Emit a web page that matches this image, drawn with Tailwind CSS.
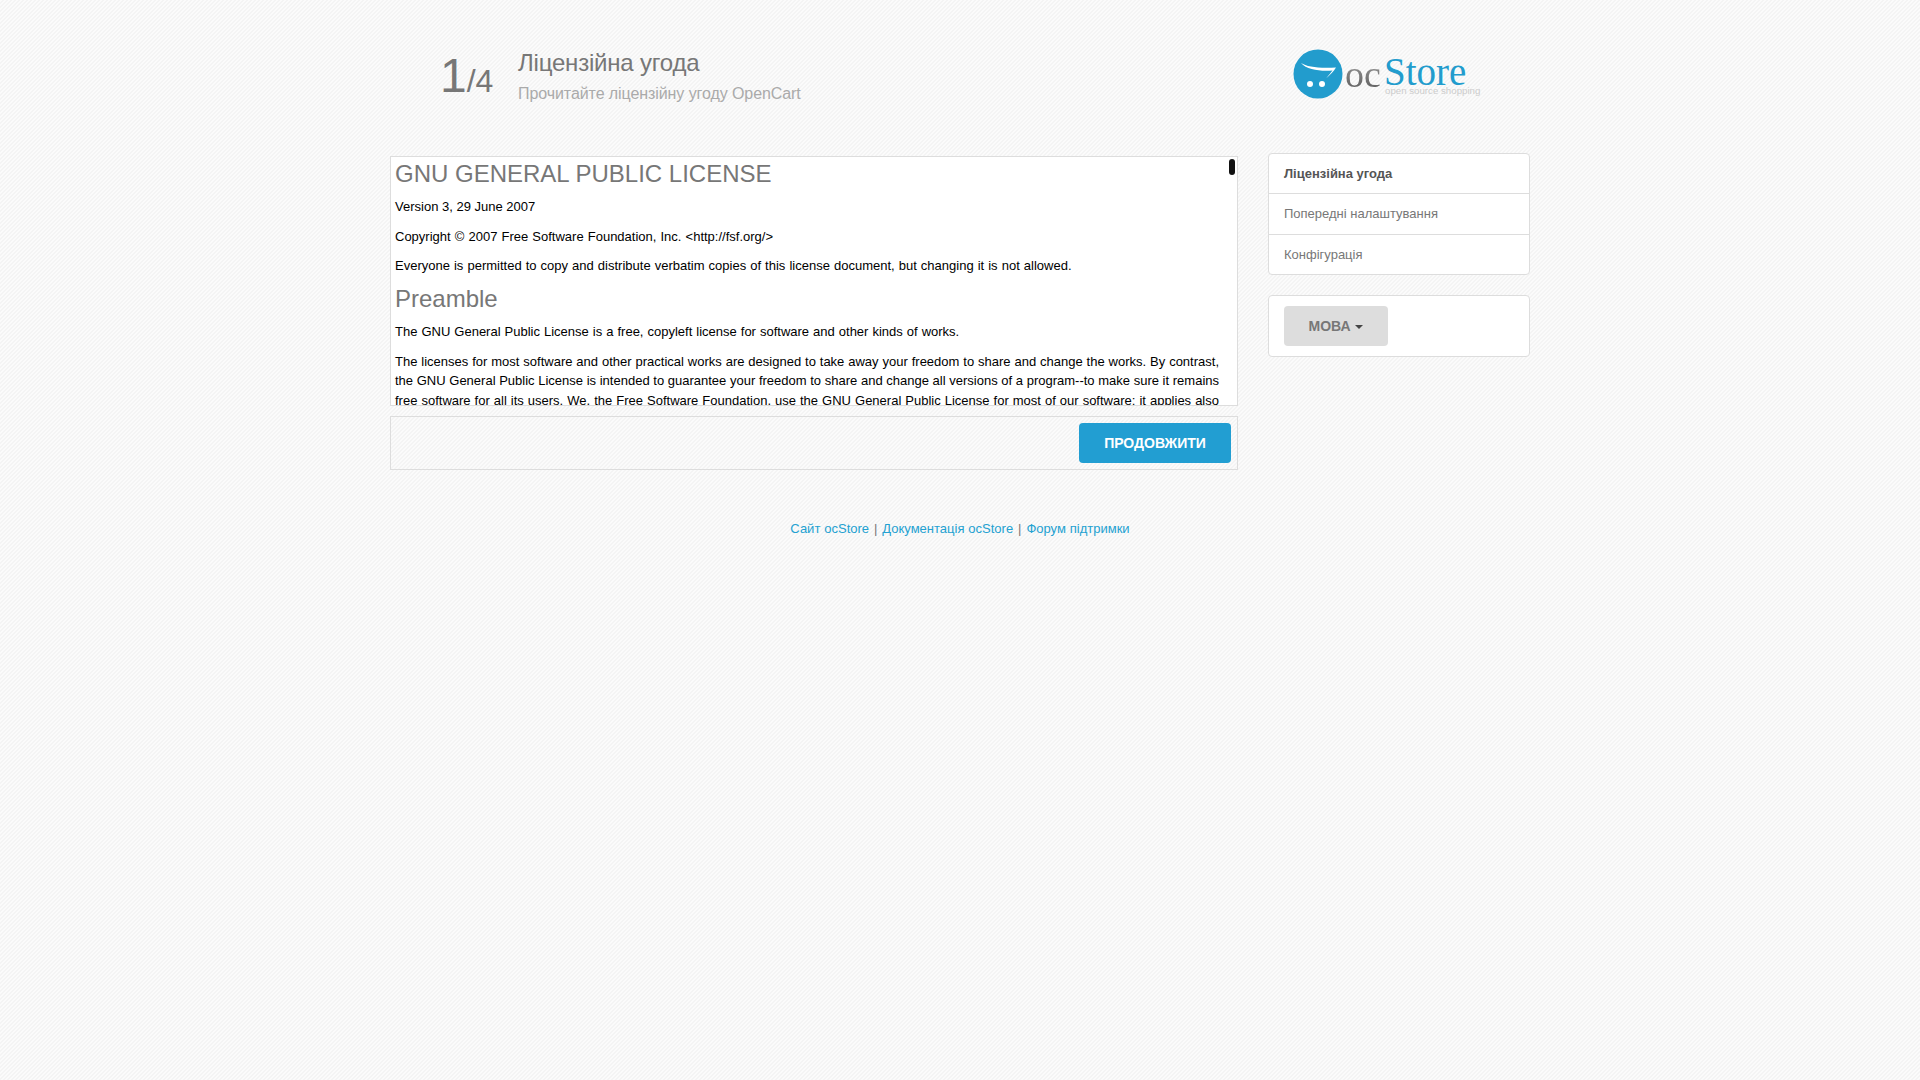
<!DOCTYPE html>
<html lang="uk">
  <head>
    <meta charset="UTF-8" />
    <meta name="viewport" content="width=device-width, initial-scale=1.0" />
    <script src="https://cdn.jsdelivr.net/npm/@tailwindcss/browser@4"></script>
    <title>ocStore</title>
  </head>
  <body class="min-h-screen font-['Liberation_Sans',Arial,sans-serif] text-[13px] leading-[19.5px] text-[#777] bg-[#f7f7f7] bg-[linear-gradient(135deg,#fbfbfb_25%,#f4f4f4_25%,#f4f4f4_50%,#fbfbfb_50%,#fbfbfb_75%,#f4f4f4_75%)] bg-[length:4px_4px]">
    <div class="w-[1170px] mx-auto px-[15px]">
      <!-- Header -->
      <header class="flex justify-between h-[153px]">
        <div class="flex pl-[50px] pt-[44px]">
          <div class="w-[78px] h-[64px] flex items-baseline text-[#777]">
            <span class="text-[48px] leading-[64px]">1</span><span class="text-[32px]">/4</span>
          </div>
          <div class="pt-[1px]">
            <h1 class="text-[24px] leading-[36px] font-normal tracking-[-0.2px] text-[#777]">Ліцензійна угода</h1>
            <p class="text-[16px] leading-[25px] tracking-[-0.08px] text-[#aaa]">Прочитайте ліцензійну угоду OpenCart</p>
          </div>
        </div>
        <!-- Logo -->
        <div class="flex items-center gap-[1px] h-[50px] mt-[49px] mr-[50px]">
          <svg width="50" height="50" viewBox="0 0 50 50">
            <circle cx="25" cy="25" r="24.5" fill="#229ccd" />
            <path d="M8 14 C14 18 26 19.500 43 18.500 C41 22 37 26 33 29.500 C36 26 38 23.500 39.500 21.500 C28 22.500 14 21 8 14 Z" fill="#fff" />
            <circle cx="17" cy="35" r="3" fill="#fff" />
            <circle cx="29" cy="35" r="3" fill="#fff" />
          </svg>
          <div class="relative h-[50px] w-[136px]">
            <span class="absolute left-[1px] top-[3px] text-[38px] leading-[44px] font-['Liberation_Serif',serif] text-transparent bg-clip-text bg-gradient-to-b from-[#aaa] to-[#555]">oc</span>
            <span class="absolute left-[40px] top-[9px] text-[39px] leading-[28px] font-['Liberation_Serif',serif] text-[#229ccd]">Store</span>
            <span class="absolute left-[41px] top-[37px] text-[9.7px] leading-[10px] text-[#ccc] whitespace-nowrap">open source shopping</span>
          </div>
        </div>
      </header>

      <div class="flex gap-[30px]">
        <!-- Licence column -->
        <main class="w-[848px] pt-[3px]">
          <div class="relative h-[250px] bg-white border border-[#ddd] overflow-hidden text-black">
            <div class="absolute right-[2px] top-[2px] w-[6px] h-[16px] rounded-[3px] bg-[#111]"></div>
            <div class="pl-[4px] pr-[18px] pt-[4px]">
              <h2 class="text-[24px] leading-[26.400px] text-[#777] mb-[10px]">GNU GENERAL PUBLIC LICENSE</h2>
              <p class="mb-[10px]">Version 3, 29 June 2007</p>
              <p class="mb-[10px] [word-spacing:0.5px]">Copyright © 2007 Free Software Foundation, Inc. &lt;http://fsf.org/&gt;</p>
              <p class="mb-[10px] [word-spacing:0.45px]">Everyone is permitted to copy and distribute verbatim copies of this license document, but changing it is not allowed.</p>
              <h3 class="text-[24px] leading-[26.400px] text-[#777] mb-[10px]">Preamble</h3>
              <p class="mb-[10px] [word-spacing:0.4px]">The GNU General Public License is a free, copyleft license for software and other kinds of works.</p>
              <p class="text-justify">The licenses for most software and other practical works are designed to take away your freedom to share and change the works. By contrast, the GNU General Public License is intended to guarantee your freedom to share and change all versions of a program--to make sure it remains free software for all its users. We, the Free Software Foundation, use the GNU General Public License for most of our software; it applies also to any other work released this way by its authors. You can apply it to your programs, too.</p>
            </div>
          </div>
          <div class="mt-[10px] h-[54px] border border-[#ddd] flex justify-end items-center pr-[6px]">
            <button type="button" class="w-[152px] h-[40px] pt-[1px] rounded-[4px] bg-[#229ed2] text-white font-bold text-[14px]">ПРОДОВЖИТИ</button>
          </div>
        </main>

        <!-- Sidebar -->
        <aside class="w-[262px]">
          <ul class="bg-white border border-[#ddd] rounded-[4px]">
            <li class="h-[40px] flex items-center px-[15px] font-bold text-[#555] border-b border-[#ddd]">Ліцензійна угода</li>
            <li class="h-[41px] flex items-center px-[15px] text-[#777] border-b border-[#ddd]">Попередні налаштування</li>
            <li class="h-[39px] flex items-center px-[15px] text-[#777]">Конфігурація</li>
          </ul>
          <div class="mt-[20px] h-[62px] bg-white border border-[#ddd] rounded-[4px] flex items-center px-[15px]">
            <button type="button" class="w-[104px] h-[40px] pt-[1px] rounded-[4px] bg-[#ddd] text-[#777] font-bold text-[14px]">МОВА
              <span class="inline-block align-middle w-0 h-0 ml-[1px] border-x-[4px] border-x-transparent border-t-[4px] border-t-[#444]"></span>
            </button>
          </div>
        </aside>
      </div>

      <!-- Footer -->
      <footer class="mt-[49px] text-center [word-spacing:0.3px]">
        <a href="#" class="text-[#23a1d1]">Сайт ocStore</a>
        <span class="mx-[1px]">|</span>
        <a href="#" class="text-[#23a1d1]">Документація ocStore</a>
        <span class="mx-[1px]">|</span>
        <a href="#" class="text-[#23a1d1]">Форум підтримки</a>
      </footer>
    </div>
  </body>
</html>
